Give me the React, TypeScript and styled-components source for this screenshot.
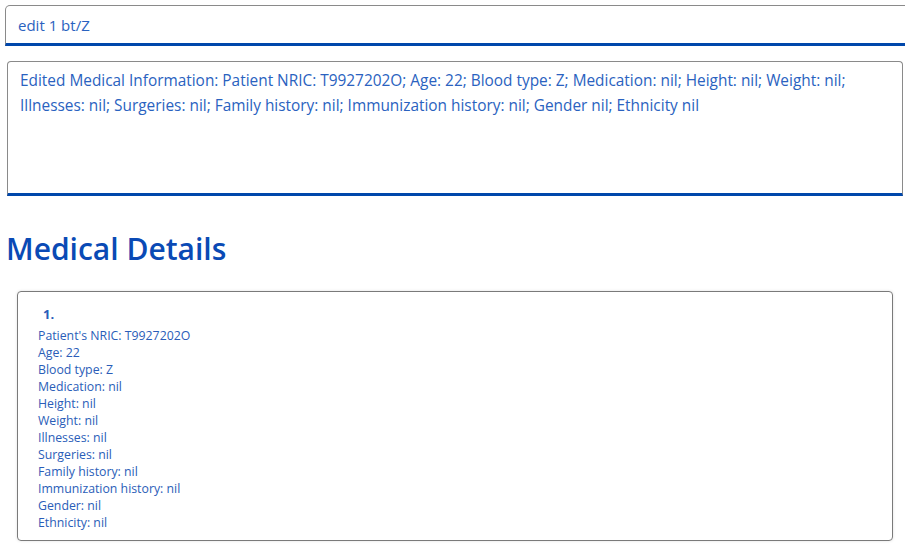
import React from "react";
import styled, { createGlobalStyle } from "styled-components";

const GlobalStyle = createGlobalStyle`
  html, body {
    margin: 0;
    padding: 0;
    background: #ffffff;
    overflow: hidden;
  }
  body {
    font-family: "Open Sans", "Noto Sans", sans-serif;
  }
`;

const Page = styled.div`
  width: 905px;
  height: 558px;
  overflow: hidden;
  padding: 5px 0 0 5px;
  box-sizing: border-box;
`;

const CommandBox = styled.div`
  width: 910px;
  height: 41px;
  box-sizing: border-box;
  border: 1px solid #8a8a8a;
  border-bottom: 3px solid #0047ab;
  border-radius: 5px 5px 0 0;
  padding: 0 12px;
  display: flex;
  align-items: center;
  color: #2a62c0;
  font-size: 15px;
`;

const ResultBox = styled.div`
  margin: 15px 0 0 2px;
  width: 896px;
  height: 135px;
  box-sizing: border-box;
  border: 1px solid #8a8a8a;
  border-bottom: 3px solid #0047ab;
  border-radius: 4px 4px 0 0;
  padding: 6px 12px;
  color: #2a62c0;
  font-size: 15.4px;
  line-height: 25px;
`;

const Heading = styled.h1`
  margin: 33px 0 0 1px;
  font-size: 30px;
  font-weight: 600;
  color: #0a4ab5;
  line-height: 40px;
`;

const Card = styled.div`
  margin: 22px 0 0 12px;
  width: 876px;
  height: 250px;
  box-sizing: border-box;
  border: 1px solid #7a7a7a;
  border-radius: 4px;
  box-shadow: 0 0 3px rgba(0, 0, 0, 0.12);
  padding: 14px 20px;
  color: #2a5db8;
`;

const Index = styled.div`
  font-size: 13px;
  font-weight: 700;
  padding-left: 5px;
  line-height: 17px;
  margin-bottom: 4px;
`;

const Field = styled.div`
  font-size: 12.3px;
  line-height: 17px;
`;

const fields = [
  "Patient's NRIC: T9927202O",
  "Age: 22",
  "Blood type: Z",
  "Medication: nil",
  "Height: nil",
  "Weight: nil",
  "Illnesses: nil",
  "Surgeries: nil",
  "Family history: nil",
  "Immunization history: nil",
  "Gender: nil",
  "Ethnicity: nil",
];

export default function App() {
  return (
    <>
      <GlobalStyle />
      <Page>
        <CommandBox>edit 1 bt/Z</CommandBox>
        <ResultBox>
          Edited Medical Information: Patient NRIC: T9927202O; Age: 22; Blood
          type: Z; Medication: nil; Height: nil; Weight: nil; Illnesses: nil;
          Surgeries: nil; Family history: nil; Immunization history: nil;
          Gender nil; Ethnicity nil
        </ResultBox>
        <Heading>Medical Details</Heading>
        <Card>
          <Index>1.</Index>
          {fields.map((f) => (
            <Field key={f}>{f}</Field>
          ))}
        </Card>
      </Page>
    </>
  );
}
